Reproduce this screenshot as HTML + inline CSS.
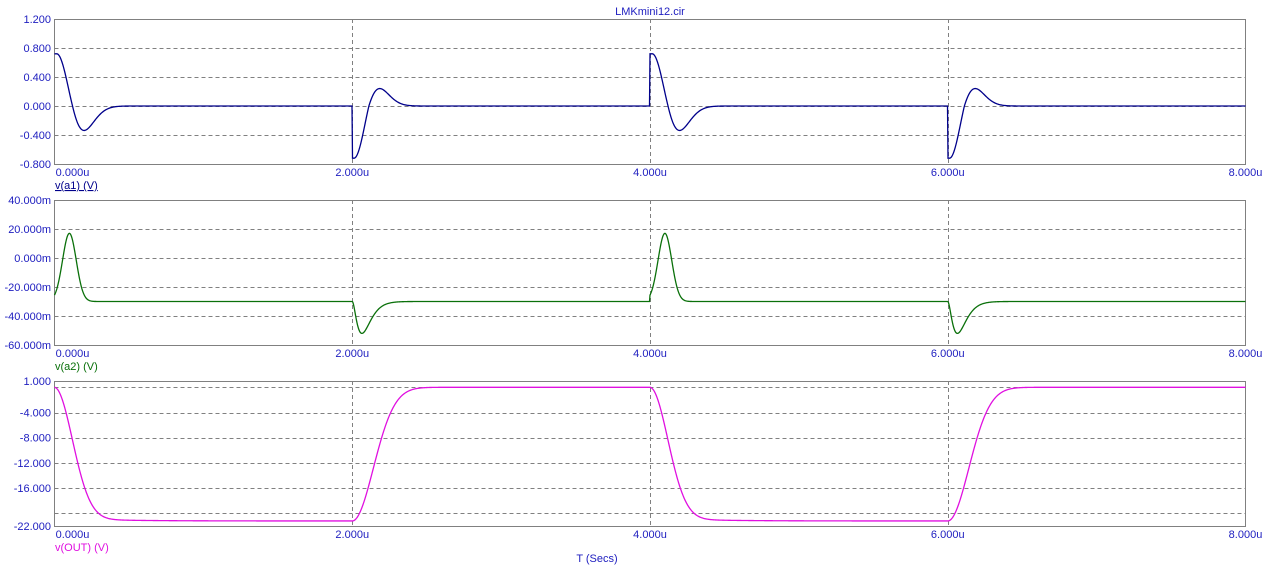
<!DOCTYPE html>
<html><head><meta charset="utf-8">
<style>
html,body{margin:0;padding:0;background:#fff;}
svg{display:block;}
text{font-family:"Liberation Sans",Arial,sans-serif;font-size:11px;fill:#2020c0;}
</style></head>
<body>
<svg id="s" width="1274" height="576" xmlns="http://www.w3.org/2000/svg">
<g id="g"></g>
<text x="650" y="15" text-anchor="middle">LMKmini12.cir</text>
<text x="597" y="562" text-anchor="middle">T (Secs)</text>
</svg>
<script>
var NS="http://www.w3.org/2000/svg",g=document.getElementById('g');
function el(t,a,txt){var e=document.createElementNS(NS,t);for(var k in a)e.setAttribute(k,a[k]);if(txt!=null)e.textContent=txt;g.appendChild(e);return e;}
var X0=54.5,X1=1245.5,PU=(X1-X0)/8;
function X(t){return X0+t*PU;}
function panel(top,bot,vmax,vmin,grids,labels,lblY,name,col,ul,fn){
  var H=bot-top;
  function Y(v){return top+(vmax-v)/(vmax-vmin)*H;}
  grids.forEach(function(v){var y=Math.round(Y(v))+0.5;el('line',{x1:X0,x2:X1,y1:y,y2:y,stroke:'#808080','stroke-dasharray':'4,3','stroke-width':1});});
  [2,4,6].forEach(function(t){var x=Math.round(X(t))+0.5;el('line',{x1:x,x2:x,y1:top,y2:bot,stroke:'#808080','stroke-dasharray':'4,3','stroke-width':1});});
  el('rect',{x:X0,y:top+0.5,width:X1-X0,height:H,fill:'none',stroke:'#808080','stroke-width':1});
  labels.forEach(function(l){el('text',{x:51,y:Y(l[0])+4,'text-anchor':'end'},l[1]);});
  ['0.000u','2.000u','4.000u','6.000u','8.000u'].forEach(function(s,i){el('text',{x:X(i*2)+(i==0?18:0),y:bot+12,'text-anchor':'middle'},s);});
  el('text',{x:55,y:bot+25,style:'fill:'+col+(ul?';text-decoration:underline':'')},name);
  var d='';for(var px=0;px<=X1-X0;px+=0.5){var tt=Math.min(px/PU,7.999);d+=(px?'L':'M')+(X0+px).toFixed(1)+' '+Y(fn(tt)).toFixed(2);}
  el('path',{d:d,fill:'none',stroke:col,'stroke-width':1.3});
}
function hat(s,w){var u=s*s/(w*w);return (1-2*u)*Math.exp(-u);}
function f1(t){var s=t%4, sign=1;if(s>=2){s-=2;sign=-1;}
  if(sign>0){var v=hat(Math.max(0,s-0.015),0.15);if(v<0)v*=1.05;return 0.72*v;}
  var v=hat(Math.max(0,s-0.012),0.141);if(v<0)v*=0.75;return -0.72*v;}
function f2(t){var s=t%4;
  if(s<2){var a=(s-0.1)/0.065;return -30+47*Math.exp(-a*a);}
  s-=2;var a=0.065;var r=s/a;return -30-22*r*r*Math.exp(2*(1-r));}
function f3(t){var s=t%4;
  if(s<2){var a=s/0.17;return -20.6*(1-Math.exp(-a*a))-0.6*(1-Math.exp(-s/0.3));}
  s-=2;var a=s/0.2;return -21.2*Math.exp(-a*a);}
panel(19,164,1.2,-0.8,[0.8,0.4,0,-0.4],[[1.2,'1.200'],[0.8,'0.800'],[0.4,'0.400'],[0,'0.000'],[-0.4,'-0.400'],[-0.8,'-0.800']],0,'v(a1) (V)','#00008b',true,f1);
panel(200,345,40,-60,[20,0,-20,-40],[[40,'40.000m'],[20,'20.000m'],[0,'0.000m'],[-20,'-20.000m'],[-40,'-40.000m'],[-60,'-60.000m']],0,'v(a2) (V)','#0a700a',false,f2);
panel(381,526,1,-22,[0,-4,-8,-12,-16,-20],[[1,'1.000'],[-4,'-4.000'],[-8,'-8.000'],[-12,'-12.000'],[-16,'-16.000'],[-22,'-22.000']],0,'v(OUT) (V)','#e010e0',false,f3);
</script>
</body></html>
